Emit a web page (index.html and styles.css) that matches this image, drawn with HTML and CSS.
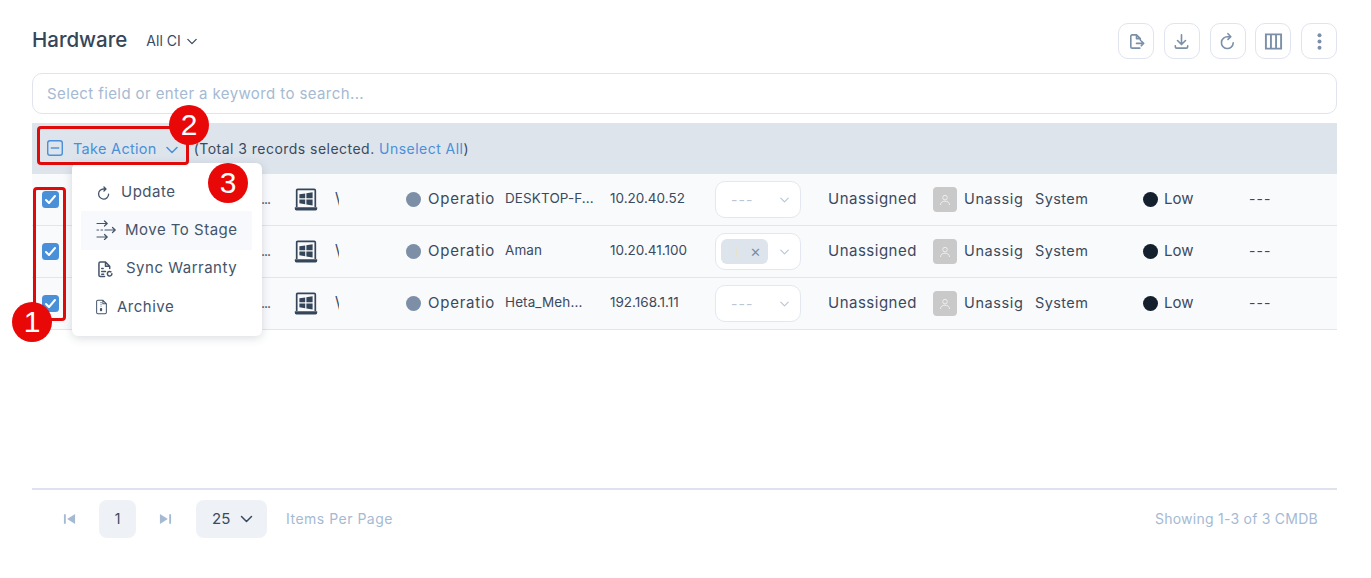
FILE: index.html
```html
<!DOCTYPE html>
<html lang="en">
<head>
<meta charset="utf-8">
<title>Hardware</title>
<link rel="stylesheet" href="styles.css">
</head>
<body>
<svg class="defs" width="0" height="0" aria-hidden="true">
  <symbol id="laptop" viewBox="0 0 24 24">
    <path d="M2.700 19V2.400a1 1 0 0 1 1-1h16.600a1 1 0 0 1 1 1V19" fill="none" stroke="currentColor" stroke-width="1.700"/>
    <path d="M.8 19.200h22.400v1.600a1.600 1.600 0 0 1-1.600 1.600H2.400a1.600 1.600 0 0 1-1.600-1.600z" fill="currentColor"/>
    <path d="M5.400 6.300l5.800-.9v4.800H5.400zM12.400 5.200l6.200-1v6h-6.200zM5.400 11.400h5.800v4.800l-5.800-.9zM12.400 11.400h6.200v6l-6.200-1z" fill="currentColor"/>
  </symbol>
  <symbol id="chev" viewBox="0 0 12 8">
    <path d="M1 1.500l5 5 5-5" fill="none" stroke="currentColor" stroke-width="1.500" stroke-linecap="round" stroke-linejoin="round"/>
  </symbol>
  <symbol id="user" viewBox="0 0 12 12">
    <circle cx="6" cy="3.600" r="2.300" fill="none" stroke="currentColor"/>
    <path d="M1.500 11c0-2.600 2-3.800 4.500-3.800s4.500 1.200 4.500 3.800" fill="none" stroke="currentColor"/>
  </symbol>
  <symbol id="check" viewBox="0 0 17 17">
    <rect width="17" height="17" rx="3.500" fill="#4a90d9"/>
    <path d="M4 9l3 3 6-7" fill="none" stroke="#fff" stroke-width="2" stroke-linecap="round" stroke-linejoin="round"/>
  </symbol>
</svg>

<div class="page">
  <header class="head">
    <h1 class="title">Hardware</h1>
    <button class="view">All CI <svg class="view-chev"><use href="#chev"/></svg></button>
    <div class="tools">
      <button class="tool"><svg viewBox="0 0 20 20"><path d="M13.500 17H5.500A1.500 1.500 0 0 1 4 15.500v-11A1.500 1.500 0 0 1 5.500 3H10l4 4v1.500M10 3v4h4M10 12h7.500M15 9.500l2.500 2.500-2.500 2.500" fill="none" stroke="currentColor" stroke-width="1.700" stroke-linecap="round" stroke-linejoin="round"/></svg></button>
      <button class="tool"><svg viewBox="0 0 20 20"><path d="M10 3v10M5.800 9l4.200 4.200L14.200 9M3.500 14.500v1a1.500 1.500 0 0 0 1.500 1.500h10a1.500 1.500 0 0 0 1.500-1.500v-1" fill="none" stroke="currentColor" stroke-width="1.700" stroke-linecap="round" stroke-linejoin="round"/></svg></button>
      <button class="tool"><svg viewBox="0 0 20 20"><path d="M16 11.500A6.200 6.200 0 1 1 10.500 5H13M10.500 1.800L13.500 5l-3 2.800" fill="none" stroke="currentColor" stroke-width="1.700" stroke-linecap="round" stroke-linejoin="round"/></svg></button>
      <button class="tool"><svg viewBox="0 0 20 20"><path d="M2 2.500h16v15H2zM7.300 2.500v15M12.700 2.500v15" fill="none" stroke="currentColor" stroke-width="2"/></svg></button>
      <button class="tool"><svg viewBox="0 0 20 20"><circle cx="10" cy="3.500" r="2.100" fill="currentColor"/><circle cx="10" cy="10" r="2.100" fill="currentColor"/><circle cx="10" cy="16.500" r="2.100" fill="currentColor"/></svg></button>
    </div>
  </header>

  <div class="search">Select field or enter a keyword to search...</div>

  <main class="table">
    <div class="bar">
      <svg class="minus" viewBox="0 0 17 17"><rect x=".75" y=".75" width="15.500" height="15.500" rx="2.500" fill="none" stroke="#4a90d9" stroke-width="1.500"/><path d="M4 8.500h9" stroke="#4a90d9" stroke-width="1.500"/></svg>
      <span class="action">Take Action</span>
      <svg class="action-chev"><use href="#chev"/></svg>
      <span class="count">(Total 3 records selected. <a class="link">Unselect All</a>)</span>
    </div>

    <div class="row">
      <svg class="box"><use href="#check"/></svg>
      <span class="name">...</span>
      <svg class="device"><use href="#laptop"/></svg>
      <span class="path">\</span>
      <span class="stage"><i class="dot grey"></i><span class="clip">Operatio</span></span>
      <span class="host">DESKTOP-F...</span>
      <span class="ip">10.20.40.52</span>
      <span class="pick"><span class="none">---</span><svg class="pick-chev"><use href="#chev"/></svg></span>
      <span class="dept">Unassigned</span>
      <span class="owner"><i class="avatar"><svg><use href="#user"/></svg></i><span class="clip">Unassig</span></span>
      <span class="source">System</span>
      <span class="level"><i class="dot dark"></i><span class="low">Low</span></span>
      <span class="last">---</span>
    </div>

    <div class="row">
      <svg class="box"><use href="#check"/></svg>
      <span class="name">...</span>
      <svg class="device"><use href="#laptop"/></svg>
      <span class="path">\</span>
      <span class="stage"><i class="dot grey"></i><span class="clip">Operatio</span></span>
      <span class="host">Aman</span>
      <span class="ip">10.20.41.100</span>
      <span class="pick"><span class="tag"><i class="tag-bar"></i><span class="tag-x">✕</span></span><svg class="pick-chev"><use href="#chev"/></svg></span>
      <span class="dept">Unassigned</span>
      <span class="owner"><i class="avatar"><svg><use href="#user"/></svg></i><span class="clip">Unassig</span></span>
      <span class="source">System</span>
      <span class="level"><i class="dot dark"></i><span class="low">Low</span></span>
      <span class="last">---</span>
    </div>

    <div class="row">
      <svg class="box"><use href="#check"/></svg>
      <span class="name">...</span>
      <svg class="device"><use href="#laptop"/></svg>
      <span class="path">\</span>
      <span class="stage"><i class="dot grey"></i><span class="clip">Operatio</span></span>
      <span class="host">Heta_Meh...</span>
      <span class="ip">192.168.1.11</span>
      <span class="pick"><span class="none">---</span><svg class="pick-chev"><use href="#chev"/></svg></span>
      <span class="dept">Unassigned</span>
      <span class="owner"><i class="avatar"><svg><use href="#user"/></svg></i><span class="clip">Unassig</span></span>
      <span class="source">System</span>
      <span class="level"><i class="dot dark"></i><span class="low">Low</span></span>
      <span class="last">---</span>
    </div>
  </main>

  <footer class="foot">
    <svg class="pager" viewBox="0 0 14 12"><path d="M1 1h2v10H1zM13 .5v11L4.500 6z" fill="currentColor"/></svg>
    <span class="page-no">1</span>
    <svg class="pager" viewBox="0 0 14 12"><path d="M13 1h-2v10h2zM1 .5v11L9.500 6z" fill="currentColor"/></svg>
    <span class="size">25 <svg class="size-chev"><use href="#chev"/></svg></span>
    <span class="per">Items Per Page</span>
    <span class="showing">Showing 1-3 of 3 CMDB</span>
  </footer>

  <nav class="menu">
    <a class="item"><svg class="ic ic-update" viewBox="0 0 14 14"><path d="M12.500 8.300A5.400 5.400 0 1 1 7.300 2.700H9.300M7.500 .5l2.200 2.200-2.200 2.100" fill="none" stroke="currentColor" stroke-width="1.400" stroke-linecap="round" stroke-linejoin="round"/></svg>Update</a>
    <a class="item hover"><svg class="ic ic-move" viewBox="0 0 20 20"><path d="M1 3.500h10M8.500 1l2.700 2.500L8.500 6M1 17h10M8.500 14.500l2.700 2.500-2.700 2.500M9 10h10M16.500 7.500l2.700 2.500-2.700 2.500M1 10h1.500M5 10h1.500" fill="none" stroke="currentColor" stroke-width="1.200" stroke-linecap="round" stroke-linejoin="round"/></svg>Move To Stage</a>
    <a class="item"><svg class="ic ic-sync" viewBox="0 0 16 18"><path d="M7 16.500H2.500A1.500 1.500 0 0 1 1 15V2.500A1.500 1.500 0 0 1 2.500 1H8l4.500 4.500V8M8 1v4.500h4.500M4 8h1.500M4 11h4M4 14h2" fill="none" stroke="currentColor" stroke-width="1.600" stroke-linecap="round" stroke-linejoin="round"/><path d="M14.800 13.500a2.400 2.400 0 1 1-1-1.900" fill="none" stroke="currentColor" stroke-width="1.600" stroke-linecap="round"/></svg>Sync Warranty</a>
    <a class="item"><svg class="ic ic-archive" viewBox="0 0 12 16"><path d="M2 .7h5.500l3.800 3.800V14a1.300 1.300 0 0 1-1.300 1.300H2A1.300 1.300 0 0 1 .7 14V2A1.300 1.300 0 0 1 2 .7zM7.500 .7v3.800h3.800" fill="none" stroke="currentColor" stroke-width="1.100"/><path d="M5.500 2.500v6" stroke="currentColor" stroke-width="1.100" stroke-dasharray="1 1"/><rect x="4.300" y="9" width="2.400" height="3.500" rx="1" fill="currentColor"/></svg>Archive</a>
  </nav>

  <div class="mark mark-list"></div>
  <div class="mark mark-action"></div>
  <span class="badge badge-1">1</span>
  <span class="badge badge-2">2</span>
  <span class="badge badge-3">3</span>
</div>
</body>
</html>
```

FILE: styles.css
```css
* { box-sizing: border-box; }

html, body {
  margin: 0;
  background: #fff;
}

.defs { position: absolute; }

.page {
  position: relative;
  width: 1371px;
  height: 578px;
  padding: 23px 34px 0 32px;
  overflow: hidden;
  font-family: "Inter", "Open Sans", sans-serif;
  font-size: 14px;
  color: #3a4a5e;
}

button { font: inherit; color: inherit; background: none; }

/* header */
.head {
  display: flex;
  align-items: center;
  height: 36px;
}

.title {
  margin: 0 19px 2px 0;
  font-size: 20.500px;
  font-weight: 500;
  line-height: 32px;
  color: #364659;
}

.view {
  display: flex;
  align-items: center;
  gap: 6px;
  padding: 0;
  border: 0;
  font-size: 14px;
  margin-bottom: 1px;
}

.view-chev { width: 10px; height: 7px; margin-top: 2px; }

.tools {
  display: flex;
  gap: 9.750px;
  margin-left: auto;
}

.tool {
  display: flex;
  align-items: center;
  justify-content: center;
  width: 36px;
  height: 36px;
  padding: 0;
  border: 1px solid #dfe4ee;
  border-radius: 10px;
  color: #7b8fa8;
}

.tool svg { width: 19px; height: 19px; }

/* search */
.search {
  height: 41px;
  margin-top: 14px;
  padding-left: 14px;
  border: 1px solid #dfe4ee;
  border-radius: 10px;
  font-size: 15px;
  letter-spacing: .4px;
  line-height: 39px;
  color: #a5bad2;
}

/* table */
.table {
  height: 365px;
  margin-top: 9px;
}

.bar {
  display: flex;
  align-items: center;
  height: 51px;
  padding: 0 0 1px 15px;
  background: #dee4ec;
}

.minus { width: 16px; height: 16px; }

.action {
  margin-left: 10px;
  color: #4a90d9;
  font-size: 14.500px;
  letter-spacing: .3px;
}

.action-chev {
  width: 12px;
  height: 8px;
  margin: 3px 0 0 9px;
  color: #4a90d9;
}

.count {
  margin-left: 16px;
  font-size: 14px;
  letter-spacing: .47px;
}

.link { color: #4a90d9; }

.row {
  display: grid;
  grid-template-columns: 42px 220px 41px 71px 99px 105px 105px 113px 105px 102px 108px 106px 88px;
  align-items: center;
  height: 52px;
  border-bottom: 1px solid #e2e6ec;
  background: #f9fafc;
}

.row > * { min-width: 0; white-space: nowrap; }

.box { width: 17px; height: 17px; margin-left: 10px; }

.name {
  padding: 0 0 3px 187px;
  letter-spacing: -1px;
}

.device { width: 24px; height: 24px; color: #36465a; }

.path {
  width: 4px;
  overflow: hidden;
  margin-bottom: 3px;
  font-size: 16px;
}

.stage, .owner, .level {
  display: flex;
  align-items: center;
}

.stage { gap: 7px; font-size: 15px; }

.clip { margin-bottom: 2px; }

.stage .clip { letter-spacing: .75px; }
.owner .clip { font-size: 14.500px; letter-spacing: .6px; margin-bottom: 3px; }

.dot {
  flex: none;
  width: 15px;
  height: 15px;
  border-radius: 50%;
}

.grey { background: #7d8fa7; }
.dark { background: #14202e; margin-right: 6px; }

.low { margin-bottom: 2px; }

.host, .ip, .source {
  margin-bottom: 3px;
  font-size: 13.500px;
}

.source { font-size: 14.500px; letter-spacing: .4px; }
.host { letter-spacing: .1px; }

.pick {
  display: flex;
  align-items: center;
  width: 86px;
  height: 37px;
  padding: 0 11px 0 15px;
  border: 1px solid #e3e8f0;
  border-radius: 10px;
  background: #fff;
}

.none {
  letter-spacing: 1px;
  color: #b9c6d6;
}

.pick-chev {
  width: 9px;
  height: 6px;
  margin-left: auto;
  color: #b9c6d6;
}

.tag {
  display: flex;
  align-items: center;
  width: 47px;
  height: 25px;
  margin-left: -10px;
  border-radius: 6px;
  background: #dee4ec;
}

.tag-bar {
  width: 1px;
  height: 10px;
  margin-left: 15px;
  background: #e6e2cc;
}

.tag-x {
  margin-left: 13px;
  font-size: 13px;
  color: #7b8fa8;
}

.dept {
  font-size: 15px;
  letter-spacing: .5px;
  margin-bottom: 3px;
}

.owner { gap: 7px; }

.avatar {
  display: flex;
  align-items: center;
  justify-content: center;
  flex: none;
  width: 24px;
  height: 25px;
  border-radius: 4px;
  background: #c9c9c9;
  color: #eee;
}

.avatar svg { width: 12px; height: 12px; }

.level { font-size: 15px; }

.last {
  letter-spacing: 1px;
  margin-bottom: 3px;
}

/* footer */
.foot {
  display: flex;
  align-items: center;
  height: 51px;
  padding: 10px 19px 1px 31px;
  border-top: 2px solid #dee2ee;
  color: #a5bad2;
}

.pager { width: 13px; height: 12px; color: #a5bad2; }

.page-no {
  width: 37px;
  height: 38px;
  margin: 0 23px;
  border-radius: 8px;
  background: #eef1f6;
  color: #3a4a5e;
  line-height: 37px;
  text-align: center;
}

.size {
  display: flex;
  align-items: center;
  gap: 10px;
  width: 71px;
  height: 38px;
  margin-left: 24px;
  padding: 0 0 2px 16px;
  border-radius: 8px;
  background: #eef1f6;
  color: #3a4a5e;
  font-size: 15px;
}

.size-chev { width: 13px; height: 8px; margin-top: 2px; }

.per { margin: 0 0 1px 19px; letter-spacing: .5px; }

.showing { margin: 0 0 1px auto; letter-spacing: .25px; }

/* overlay menu */
.menu {
  position: absolute;
  left: 72px;
  top: 163px;
  width: 190px;
  height: 173px;
  padding: 10px 10px 0 9px;
  border-radius: 6px;
  background: #fff;
  box-shadow: 0 2px 10px rgba(40, 55, 80, .18);
}

.item {
  display: flex;
  align-items: center;
  height: 38.300px;
  padding: 0 0 2px 15px;
  font-size: 15px;
  letter-spacing: .5px;
  color: #44546a;
}

.hover { background: #f8f9fc; }

.ic { flex: none; }
.ic-update { width: 13px; height: 14px; margin: 3px 11px 0 1px; }
.ic-move { width: 20px; height: 20px; margin: 2px 9px 0 0; }
.ic-sync { width: 15px; height: 17px; margin: 4px 13px 0 2px; }
.ic-archive { width: 11px; height: 16px; margin: 2px 10px 0 0; }

/* annotations */
.mark {
  position: absolute;
  border: 3px solid #e00a0a;
  border-radius: 4px;
}

.mark-list { left: 33px; top: 187px; width: 33px; height: 134px; }
.mark-action { left: 37px; top: 126px; width: 152px; height: 39px; }

.badge {
  position: absolute;
  width: 40px;
  height: 40px;
  border-radius: 50%;
  background: #e80808;
  color: #fff;
  font-family: "Liberation Sans", sans-serif;
  font-size: 30px;
  line-height: 40px;
  text-align: center;
}

.badge-1 { left: 12px; top: 302px; }
.badge-2 { left: 169px; top: 105px; }
.badge-3 { left: 208px; top: 163px; }
```
